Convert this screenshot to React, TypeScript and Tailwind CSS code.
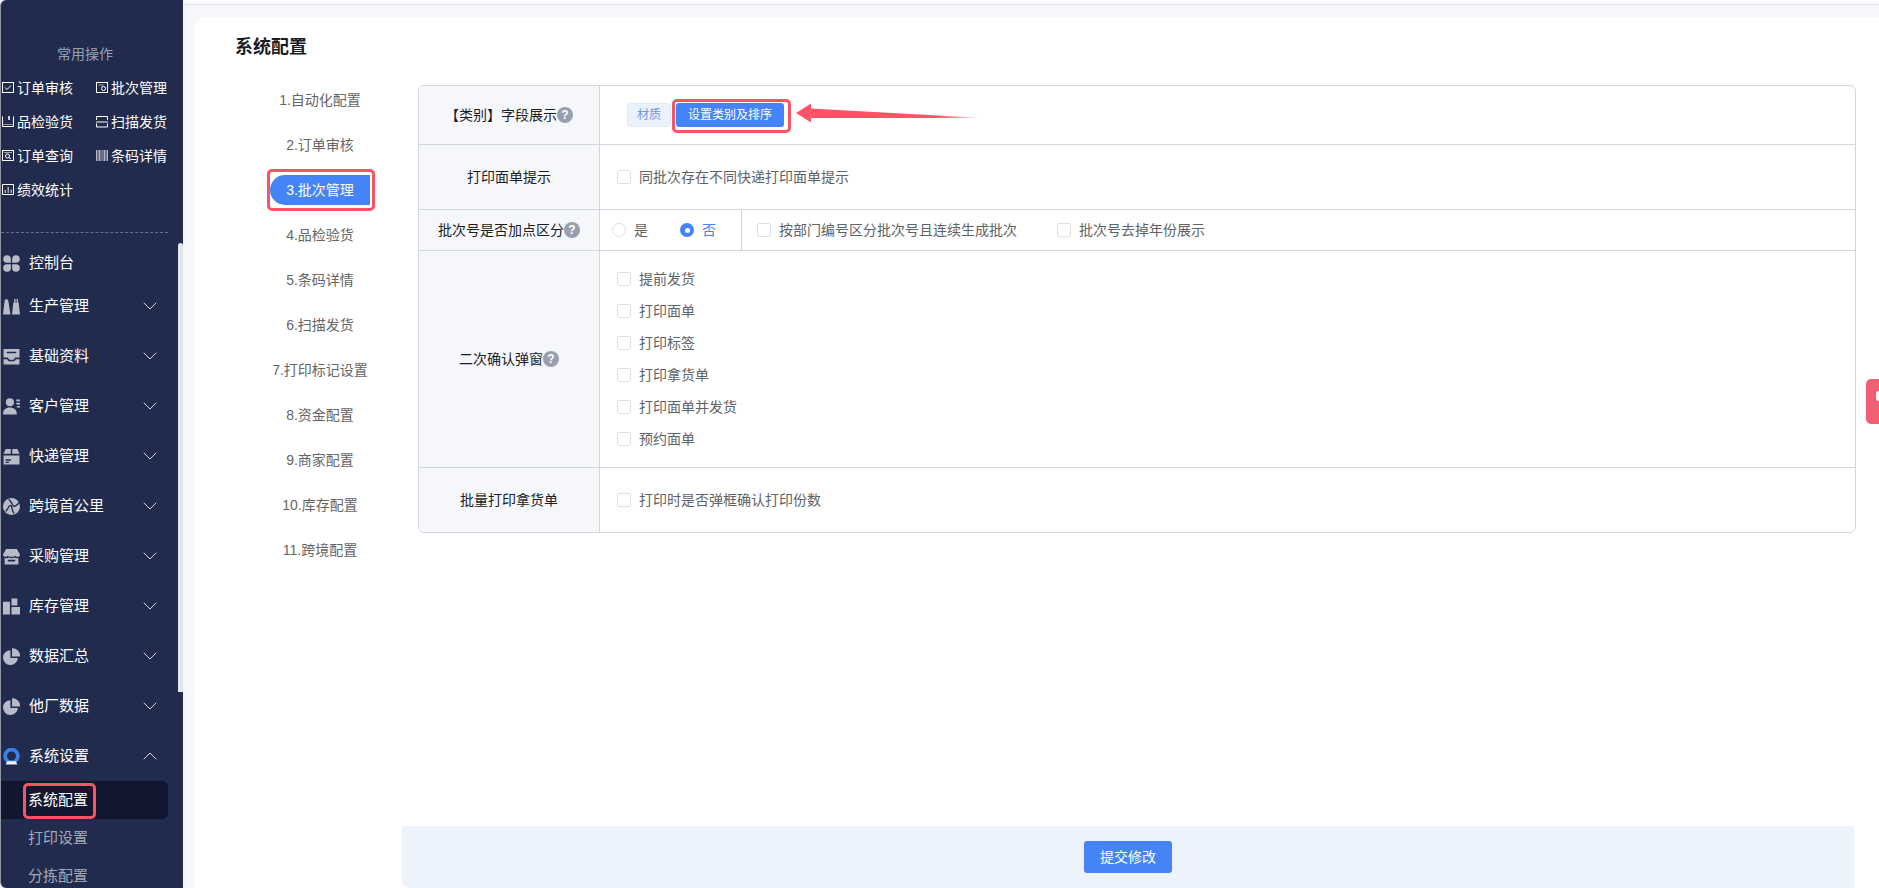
import { ChevronDown, ChevronUp } from "lucide-react";
import type { ReactNode } from "react";

const fontStack = "font-['Liberation_Sans','Noto_Sans_CJK_SC',sans-serif]";

const Svg = ({ children, size = 16 }: { children: ReactNode; size?: number }) => (
  <svg width={size} height={size} viewBox="0 0 16 16" className="shrink-0">
    {children}
  </svg>
);

const line = { fill: "none", stroke: "#fff", strokeWidth: 1 };
const solid = { fill: "#b9bcc8" };

const quickOps: { label: string; icon: ReactNode }[] = [
  {
    label: "订单审核",
    icon: <><rect x="1.5" y="2.5" width="11" height="10" {...line} /><path d="M4 7.5l2 2 4-4" {...line} /></>,
  },
  {
    label: "批次管理",
    icon: <><rect x="1.5" y="2.5" width="11" height="10" {...line} /><path d="M3.5 5h5" {...line} stroke="#aaa" /><circle cx="8.5" cy="8.5" r="2" {...line} /></>,
  },
  {
    label: "品检验货",
    icon: <><path d="M1.5 2.5v10h11v-10" {...line} /><path d="M1.5 10.5h11" {...line} stroke="#999" /><rect x="7" y="2" width="2" height="4" fill="#ccc" /></>,
  },
  {
    label: "扫描发货",
    icon: <><path d="M1.5 6v-3.500h11V6M1.500 9.500V13h11V9.500" {...line} /><rect x="1" y="7" width="12" height="2" fill="#8d92a6" /></>,
  },
  {
    label: "订单查询",
    icon: <><rect x="1.5" y="2.500" width="11" height="10" {...line} /><path d="M3 4.500h8" {...line} stroke="#aaa" /><circle cx="6.500" cy="8" r="2" {...line} /><path d="M8 9.500l2 1.500" {...line} /></>,
  },
  {
    label: "条码详情",
    icon: <path d="M1 2h1.500v11H1zM3.500 2h2v11h-2zM6.500 2h1v11h-1zM8.500 2h2v11h-2zM11.500 2h1.500v11h-1.500z" fill="#b4b7c4" />,
  },
  {
    label: "绩效统计",
    icon: <><path d="M1.500 2.500h11v10h-11z" {...line} /><path d="M3.500 11V8h1.500v3zM6.500 11V5h1.500v6zM9.500 11V7.500H11V11z" fill="#a9adbb" /></>,
  },
];

const menuIcons: Record<string, ReactNode> = {
  production: <path d="M0 15.500L1.500 2.500a1.800 1.800 0 0 1 3.500 0L7 15.500zM8.500 15.500l1.200-11h.8V1h1.300v3.500h1V1H14l.2 3.500h.5L16 15.500z" {...solid} />,
  base: <path d="M.5 1h15v8h-4L10 11H6L4.500 9h-4zM3.500 3.500V5h9V3.500zM.5 10.500h3.300L5.300 12.500h5.400l1.500-2h3.300V15.500H.5z" {...solid} fillRule="evenodd" />,
  customer: <><circle cx="6.500" cy="4" r="3.800" {...solid} /><path d="M0 15.500c0-4.500 2.500-6.500 6.500-6.500s6.500 2 6.500 6.500z" {...solid} /><path d="M12.500 1.500H16V3h-3.500zM12.500 4.500H16V6h-3.500zM13 7.500h3V9h-3z" {...solid} /></>,
  express: <path d="M.5 5.500L2.500 1H7.300v4.500zM8.700 1h4.800l2 4.500H8.700zM.5 7h15v8.500H.5zM2.500 10.500V12h5v-1.500zM2.500 13v1h3v-1z" {...solid} fillRule="evenodd" />,
  crossBorder: <><circle cx="8" cy="8" r="8" {...solid} /><path d="M2.500 12.500c2-1 2.500-5.500 4.500-5.500s1 6 3.500 7.500M5.500 .5C6 3 8 3.500 9 6.500s4.500 0 6-2" fill="none" stroke="#212b4e" strokeWidth="1.300" /></>,
  purchase: <path d="M3 1h10l3 5c0 2.400-3.700 3-4.500 1-.8 1.800-6.200 1.800-7 0C3.700 9 0 8.400 0 6zM1.500 9.300c1.500 .5 2.800 .3 3.800-.3 1.700 1 3.700 1 5.400 0 1 .6 2.300 .8 3.800 .3V15.500h-13zM4.500 11v1.800h7V11z" {...solid} fillRule="evenodd" />,
  stock: <path d="M0 3.500h6.500v12H0zM8 .5h5.500v6.500H8zM8 8.500h8v7H8z" {...solid} />,
  pie: <><path d="M7 2a7 7 0 1 0 7 7.500H7z" {...solid} /><path d="M8.500 0a7.500 7.500 0 0 1 7.500 8H8.500z" {...solid} /></>,
};

const menus = [
  { label: "生产管理", icon: menuIcons.production },
  { label: "基础资料", icon: menuIcons.base },
  { label: "客户管理", icon: menuIcons.customer },
  { label: "快递管理", icon: menuIcons.express },
  { label: "跨境首公里", icon: menuIcons.crossBorder },
  { label: "采购管理", icon: menuIcons.purchase },
  { label: "库存管理", icon: menuIcons.stock },
  { label: "数据汇总", icon: menuIcons.pie },
  { label: "他厂数据", icon: menuIcons.pie },
];

const steps = [
  "1.自动化配置",
  "2.订单审核",
  "3.批次管理",
  "4.品检验货",
  "5.条码详情",
  "6.扫描发货",
  "7.打印标记设置",
  "8.资金配置",
  "9.商家配置",
  "10.库存配置",
  "11.跨境配置",
];

const confirmOptions = ["提前发货", "打印面单", "打印标签", "打印拿货单", "打印面单并发货", "预约面单"];

function RedBox({ className }: { className: string }) {
  return <span className={`absolute rounded-[5px] border-[3px] border-[#fb5266] pointer-events-none ${className}`} />;
}

function Help() {
  return (
    <span className="inline-flex h-4 w-4 shrink-0 items-center justify-center rounded-full bg-[#9a9fae] text-[12px] font-bold leading-none text-white">
      ?
    </span>
  );
}

function Check({ label, className = "" }: { label: string; className?: string }) {
  return (
    <label className={`flex items-center gap-2 text-sm text-[#606266] ${className}`}>
      <span className="h-[14px] w-[14px] rounded-[2px] border border-[#dcdfe6] bg-white" />
      {label}
    </label>
  );
}

function Row({ label, help, className, children }: { label: string; help?: boolean; className: string; children: ReactNode }) {
  return (
    <div className={`flex border-[#d4d6dd] ${className}`}>
      <div className="flex w-[181px] shrink-0 items-center justify-center border-r border-[#d4d6dd] bg-[#f5f7fb] text-sm text-[#1a1d26]">
        {label}
        {help && <Help />}
      </div>
      <div className="flex min-w-0 flex-1">{children}</div>
    </div>
  );
}

function Sidebar() {
  return (
    <aside className="relative h-full w-[183px] shrink-0 overflow-hidden rounded-tl-[6px] rounded-bl-[6px] border-l border-[#8f93a3] bg-[#212b4e] text-sm text-white">
      <div className="pt-[43px]">
        <div className="w-[168px] text-center leading-[22px] text-[#97a0b5]">常用操作</div>
        <div className="mt-[12px] grid w-[180px] grid-cols-[94px_86px] gap-y-[12px]">
          {quickOps.map((op) => (
            <div key={op.label} className="flex h-[22px] items-center">
              <Svg>{op.icon}</Svg>
              {op.label}
            </div>
          ))}
        </div>
        <div className="mt-[31px] w-[167px] border-t border-dashed border-[#6b7288]" />
        <div className="mt-[12px] flex h-[36px] items-center gap-[9px] pl-[2px] text-[15px]">
          <Svg size={17}>
            <path d="M3.800 .2A3.600 3.600 0 0 1 7.400 3.800V7.400H3.800A3.600 3.600 0 0 1 3.800 .2zM12.200 .2A3.600 3.600 0 0 0 8.600 3.800V7.400h3.600A3.600 3.600 0 0 0 12.200 .2zM3.800 15.800A3.600 3.600 0 0 0 7.400 12.200V8.600H3.800A3.600 3.600 0 0 0 3.800 15.800zM12.200 15.800A3.600 3.600 0 0 1 8.600 12.200V8.600h3.600A3.600 3.600 0 0 1 12.200 15.800z" {...solid} />
          </Svg>
          控制台
        </div>
        {menus.map((m) => (
          <div key={m.label} className="flex h-[50px] w-[168px] items-center gap-[9px] pl-[2px] pr-[7px] text-[15px]">
            <Svg size={17}>{m.icon}</Svg>
            <span className="flex-1">{m.label}</span>
            <ChevronDown size={24} strokeWidth={1} className="text-[#d5d7e0]" />
          </div>
        ))}
        <div className="flex h-[50px] w-[168px] items-center gap-[9px] pl-[2px] pr-[7px] text-[15px]">
          <Svg size={17}>
            <circle cx="8" cy="7.500" r="6" fill="none" stroke="#3f7fe8" strokeWidth="3.500" />
            <path d="M4 12.500h8l1.500 3h-11z" fill="#f0f1f5" />
          </Svg>
          <span className="flex-1">系统设置</span>
          <ChevronUp size={24} strokeWidth={1} className="text-[#d5d7e0]" />
        </div>
        <div className="relative flex h-[38px] w-[167px] items-center rounded-r-[6px] bg-[#12172f] pl-[27px] text-[15px]">
          系统配置
          <RedBox className="left-[22px] top-[2px] h-[36px] w-[73px]" />
        </div>
        <div className="flex h-[38px] items-center pl-[27px] text-[15px] text-[#a3a8b6]">打印设置</div>
        <div className="flex h-[38px] items-center pl-[27px] text-[15px] text-[#a3a8b6]">分拣配置</div>
      </div>
      <div className="absolute right-0 top-[243px] h-[449px] w-[5px] rounded-t-[3px] bg-[#e4e6ee]" />
    </aside>
  );
}

function ConfigTable() {
  return (
    <div className="overflow-hidden rounded-[6px] border border-[#d4d6dd] bg-white">
      <Row label="【类别】字段展示" help className="h-[58px]">
        <div className="flex items-center pl-[27px]">
          <span className="flex h-6 w-[44px] items-center justify-center rounded-[4px] border border-[#dbe7fb] bg-[#ecf2fd] text-xs text-[#6f97ea]">
            材质
          </span>
          <span className="ml-[5px] flex h-6 w-[108px] items-center justify-center rounded-[3px] bg-[#4584f6] text-xs text-white">
            设置类别及排序
          </span>
        </div>
      </Row>
      <Row label="打印面单提示" className="h-[65px] border-t">
        <Check label="同批次存在不同快递打印面单提示" className="pl-[17px]" />
      </Row>
      <Row label="批次号是否加点区分" help className="h-[41px] border-t">
        <div className="flex w-[142px] items-center border-r border-[#d4d6dd] pl-[12px] text-sm">
          <span className="h-[14px] w-[14px] rounded-full border border-[#dcdfe6]" />
          <span className="ml-2 text-[#606266]">是</span>
          <span className="ml-[32px] flex h-[14px] w-[14px] items-center justify-center rounded-full bg-[#4584f6]">
            <span className="h-[5px] w-[5px] rounded-full bg-white" />
          </span>
          <span className="ml-2 text-[#4584f6]">否</span>
        </div>
        <Check label="按部门编号区分批次号且连续生成批次" className="pl-[15px]" />
        <Check label="批次号去掉年份展示" className="pl-[40px]" />
      </Row>
      <Row label="二次确认弹窗" help className="h-[217px] border-t">
        <div className="flex flex-col gap-[10px] pl-[17px] pt-[17px]">
          {confirmOptions.map((o) => (
            <Check key={o} label={o} className="h-[22px]" />
          ))}
        </div>
      </Row>
      <Row label="批量打印拿货单" className="h-[65px] border-t">
        <Check label="打印时是否弹框确认打印份数" className="pl-[17px]" />
      </Row>
    </div>
  );
}

export default function App() {
  return (
    <div className={`flex h-[888px] w-full overflow-hidden bg-[#f5f7fb] ${fontStack}`}>
      <Sidebar />
      <main className="relative flex min-w-0 flex-1 flex-col">
        <div className="h-[5px] shrink-0 border-b border-[#e3e4e8] bg-[#fafbfc]" />
        <div className="ml-[12px] mt-[12px] flex min-h-0 flex-1 flex-col rounded-tl-[10px] bg-white">
          <h1 className="pl-[40px] pt-[18px] pb-[26px] text-[18px] font-bold leading-[24px] text-[#1a1d26]">系统配置</h1>
          <div className="flex min-h-0 flex-1">
            <nav className="ml-[75px] w-[100px] shrink-0 text-sm text-[#666]">
              {steps.map((s) => (
                <div
                  key={s}
                  className={`relative mb-[15px] flex h-[30px] items-center justify-center whitespace-nowrap ${
                    s === "3.批次管理" ? "rounded-l-[15px] bg-[#4584f6] text-white" : ""
                  }`}
                >
                  {s}
                  {s === "3.批次管理" && <RedBox className="-left-[3px] -top-[6px] -right-[5px] -bottom-[6px]" />}
                </div>
              ))}
            </nav>
            <div className="ml-[32px] flex min-w-0 flex-1 flex-col pr-[23px]">
              <div className="relative pl-[16px]">
                <ConfigTable />
                <RedBox className="left-[270px] top-[14px] h-[34px] w-[119px]" />
                <svg width="190" height="24" viewBox="0 0 190 24" className="absolute left-[393px] top-[16px]">
                  <defs>
                    <linearGradient id="arrowFade" x1="0" x2="1" y1="0" y2="0">
                      <stop offset="0" stopColor="#ff5468" />
                      <stop offset="0.75" stopColor="#ff5468" />
                      <stop offset="1" stopColor="#ff5468" stopOpacity="0.1" />
                    </linearGradient>
                  </defs>
                  <path d="M1 12L16 2.500 16 7.500 188 17 16 17 16 21.500z" fill="url(#arrowFade)" />
                </svg>
              </div>
              <div className="mt-auto mr-[2px] flex h-[62px] shrink-0 items-center justify-center rounded-bl-[8px] bg-[#edf3fd]">
                <button className="h-8 w-[88px] rounded-[3px] bg-[#4584f6] text-sm text-white">提交修改</button>
              </div>
            </div>
          </div>
        </div>
        <div className="absolute right-0 top-[379px] flex h-[45px] w-[13px] items-center justify-end overflow-hidden rounded-l-[5px] bg-[#f25f75]">
          <span className="mb-[12px] h-[10px] w-[3px] rounded-l-full bg-white" />
        </div>
      </main>
    </div>
  );
}
